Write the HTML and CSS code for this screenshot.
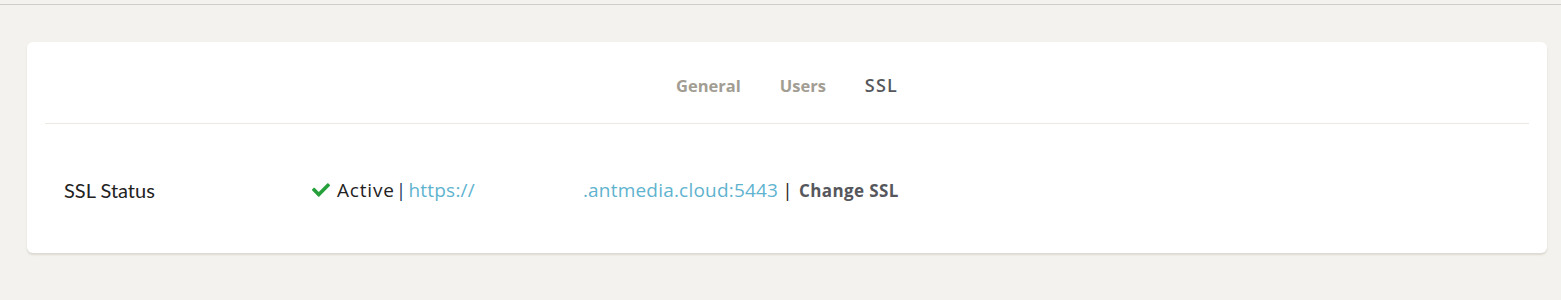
FILE: index.html
```html
<!DOCTYPE html>
<html lang="en">
  <head>
    <meta charset="UTF-8" />
    <title>Application Settings</title>
    <link rel="stylesheet" href="styles.css">
  </head>
  <body>
    <div class="top-bar"></div>

    <main class="content">
      <section class="settings-card">
        <nav class="tabs">
          <a class="tab">General</a>
          <a class="tab">Users</a>
          <a class="tab active">SSL</a>
        </nav>

        <div class="ssl-row">
          <div class="ssl-label">SSL Status</div>
          <div class="ssl-value">
            <svg class="check-icon" viewBox="0 0 512 512" width="18" height="18">
              <path fill="#26a03b" d="M173.9 439.4L7.5 273c-10-10-10-26.2 0-36.2l36.2-36.2c10-10 26.2-10 36.2 0L192 312.7 432.1 72.6c10-10 26.2-10 36.2 0l36.2 36.2c10 10 10 26.2 0 36.2L210.1 439.4c-10 10-26.2 10-36.2 0z"/>
            </svg>
            <span class="status">Active</span>
            <span class="sep">|</span>
            <a class="ssl-link">https://<span class="hidden-host"></span>.antmedia.cloud:5443</a>
            <span class="sep sep-last">|</span>
            <a class="change-ssl">Change SSL</a>
          </div>
        </div>
      </section>
    </main>
  </body>
</html>
```

FILE: styles.css
```css
* {
  margin: 0;
  padding: 0;
  box-sizing: border-box;
}

body {
  background-color: #f3f2ee;
  font-family: "Open Sans", "Noto Sans", sans-serif;
  min-height: 100vh;
}

.top-bar {
  height: 5px;
  border-bottom: 1px solid #cfcdc8;
}

.content {
  padding: 37px 14px 0 27px;
}

.settings-card {
  background-color: white;
  border-radius: 6px;
  box-shadow: 0 2px 2px rgba(120, 110, 90, 0.18);
  padding: 0 18px 50px;
}

.tabs {
  display: flex;
  justify-content: center;
  align-items: baseline;
  gap: 39px;
  height: 82px;
  padding-top: 31px;
  border-bottom: 1px solid #ece9e3;
  font-size: 16.5px;
}

.tab {
  color: #a29d92;
  font-weight: 700;
  cursor: pointer;
}

.tab.active {
  color: #55575c;
  font-weight: 600;
  font-size: 18px;
  letter-spacing: 1.2px;
}

.ssl-row {
  display: flex;
  align-items: center;
  padding: 53px 0 0 19px;
}

.ssl-label {
  width: 248px;
  font-family: "Lato", sans-serif;
  font-size: 20px;
  color: #222;
}

.ssl-value {
  display: flex;
  align-items: center;
  font-size: 19px;
  letter-spacing: 0.4px;
  color: #222;
}

.check-icon {
  margin-right: 7px;
}

.status {
  letter-spacing: 0.8px;
}

.sep {
  margin: 0 2px 0 1px;
  color: #1f3d5c;
}

.sep-last {
  margin-left: 4px;
  color: #2b2620;
}

.ssl-link {
  color: #5fb3cf;
  letter-spacing: 0.2px;
}

.hidden-host {
  display: inline-block;
  width: 108px;
}

.change-ssl {
  margin-left: 4px;
  font-size: 17px;
  font-weight: 700;
  color: #55575c;
}
```
